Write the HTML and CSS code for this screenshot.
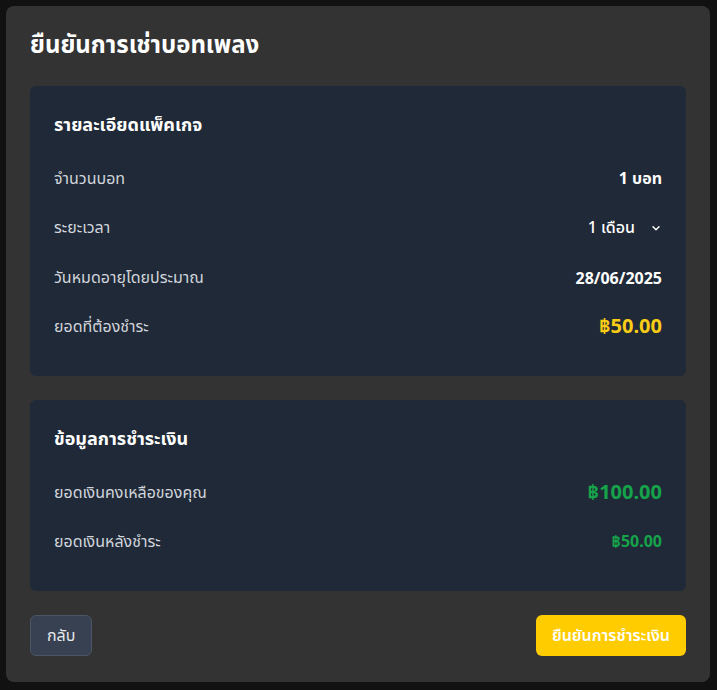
FILE: index.html
```html
<!DOCTYPE html>
<html lang="th">
<head>
  <meta charset="UTF-8">
  <title>ยืนยันการเช่าบอทเพลง</title>
  <link rel="stylesheet" href="styles.css">
</head>
<body>

  <section class="modal">
    <h1 class="modal-title">ยืนยันการเช่าบอทเพลง</h1>

    <div class="card">
      <h2 class="card-title">รายละเอียดแพ็คเกจ</h2>
      <div class="row">
        <span class="label">จำนวนบอท</span>
        <span class="value">1 บอท</span>
      </div>
      <div class="row">
        <span class="label">ระยะเวลา</span>
        <span class="value select">1 เดือน
          <svg width="12" height="12" viewBox="0 0 20 20" aria-hidden="true"><path d="M5 8l5 5 5-5" fill="none" stroke="currentColor" stroke-width="2.4" stroke-linecap="round" stroke-linejoin="round"/></svg>
        </span>
      </div>
      <div class="row">
        <span class="label">วันหมดอายุโดยประมาณ</span>
        <span class="value">28/06/2025</span>
      </div>
      <div class="row">
        <span class="label">ยอดที่ต้องชำระ</span>
        <span class="value amount yellow">฿50.00</span>
      </div>
    </div>

    <div class="card">
      <h2 class="card-title">ข้อมูลการชำระเงิน</h2>
      <div class="row">
        <span class="label">ยอดเงินคงเหลือของคุณ</span>
        <span class="value amount green">฿100.00</span>
      </div>
      <div class="row">
        <span class="label">ยอดเงินหลังชำระ</span>
        <span class="value green">฿50.00</span>
      </div>
    </div>

    <div class="actions">
      <button class="btn btn-back">กลับ</button>
      <button class="btn btn-confirm">ยืนยันการชำระเงิน</button>
    </div>
  </section>

</body>
</html>
```

FILE: styles.css
```css
body {
  background: #111111;
  color: #ffffff;
  font-family: "Noto Sans", "Noto Sans Thai", "DejaVu Sans", sans-serif;
  margin: 0;
  padding: 6px;
}

.modal {
  background: #333333;
  border-radius: 8px;
  box-sizing: border-box;
  display: flex;
  flex-direction: column;
  gap: 24px;
  height: 676px;
  padding: 24px;
  width: 704px;
}

.modal-title {
  font-size: 24px;
  font-weight: 700;
  line-height: 32px;
  margin: -2px 0 2px;
}

.card {
  background: #1f2937;
  border-radius: 6px;
  padding: 24px;
}

.card-title {
  font-size: 18px;
  font-weight: 700;
  line-height: 28px;
  margin: 0 0 16px;
}

.row {
  align-items: center;
  display: flex;
  height: 49.5px;
  justify-content: space-between;
}

.label {
  color: #d1d5db;
  font-size: 16px;
}

.value {
  font-size: 16px;
  font-weight: 700;
}

.select {
  align-items: center;
  display: flex;
  font-weight: 500;
  gap: 15px;
}

.amount {
  font-size: 20px;
}

.yellow {
  color: #facc15;
}

.green {
  color: #16a34a;
}

.actions {
  display: flex;
  justify-content: space-between;
}

.btn {
  border-radius: 6px;
  font-family: inherit;
  font-size: 16px;
  height: 41px;
  padding: 0 16px;
}

.btn-back {
  background: #374151;
  border: 1px solid #4b5563;
  color: #e5e7eb;
}

.btn-confirm {
  background: #ffcc00;
  border: 0;
  color: #ffffff;
  font-weight: 600;
}
```
